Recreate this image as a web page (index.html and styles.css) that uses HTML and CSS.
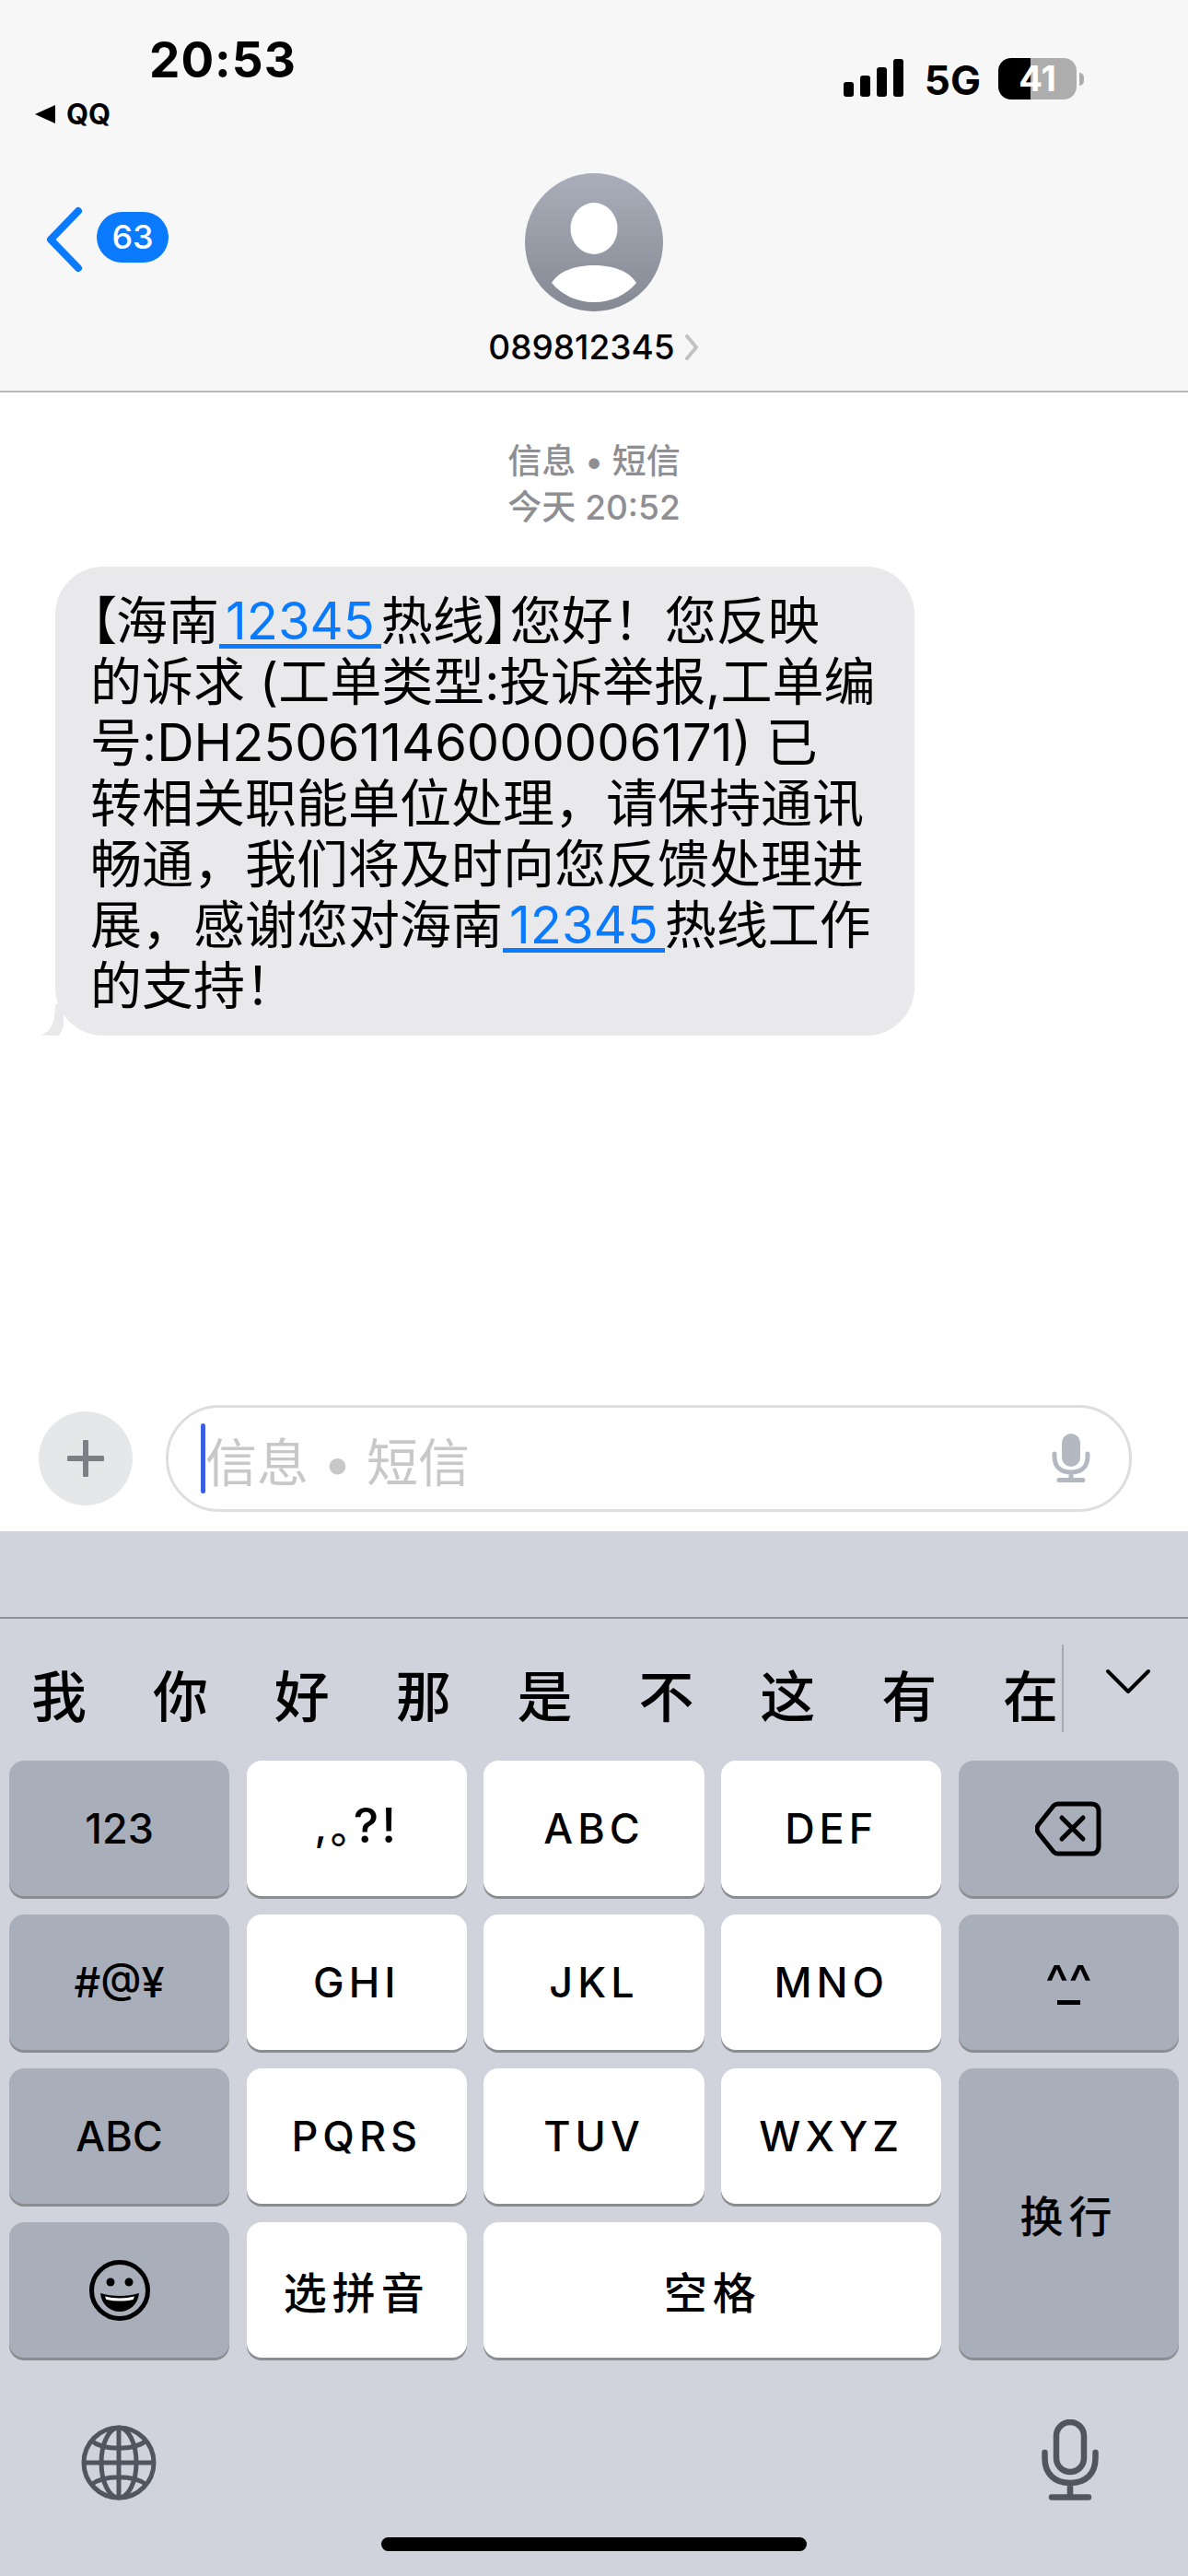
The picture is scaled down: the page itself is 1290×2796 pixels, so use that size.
FILE: index.html
```html
<!DOCTYPE html>
<html lang="zh-CN">
<head>
  <meta charset="UTF-8">
  <title>信息</title>
  <link rel="stylesheet" href="styles.css">
</head>
<body>
  <div class="phone">
    <!-- HEADER -->
    <header class="header">
      <div class="status">
        <div class="status-left">
          <div class="time">20:53</div>
          <div class="return"><span class="return-arrow"></span>QQ</div>
        </div>
        <div class="status-right">
          <div class="signal"><i class="s1"></i><i class="s2"></i><i class="s3"></i><i class="s4"></i></div>
          <div class="network">5G</div>
          <div class="battery"><div class="battery-body">41</div><div class="battery-nub"></div></div>
        </div>
      </div>
      <div class="nav">
        <div class="back">
          <svg class="back-chevron" width="46" height="72" viewBox="0 0 46 72"><path d="M38 5 L8 36 L38 67" fill="none" stroke="#0a7aff" stroke-width="8" stroke-linecap="round" stroke-linejoin="round"/></svg>
          <div class="badge">63</div>
        </div>
        <div class="contact">
          <svg class="avatar" width="150" height="150" viewBox="0 0 150 150">
            <defs><linearGradient id="avatarFill" x1="0" y1="0" x2="0" y2="1"><stop offset="0" stop-color="#a9aeba"/><stop offset="1" stop-color="#858993"/></linearGradient></defs>
            <circle cx="75" cy="75" r="75" fill="url(#avatarFill)"/>
            <ellipse cx="75" cy="60" rx="25.5" ry="28" fill="#fff"/>
            <path d="M29 119 C37 106 55 100 75 100 C95 100 113 106 121 119 C110 132 94 140 75 140 C56 140 40 132 29 119 Z" fill="#fff"/>
          </svg>
          <div class="contact-name">089812345<svg class="name-chevron" width="18" height="28" viewBox="0 0 18 28"><path d="M4 2 L14 14 L4 26" fill="none" stroke="#c2c2c4" stroke-width="4" stroke-linecap="round" stroke-linejoin="round"/></svg></div>
        </div>
      </div>
    </header>

    <!-- MESSAGES -->
    <main class="thread">
      <div class="stamp">
        <div class="stamp-kind">信息 • 短信</div>
        <div>今天 20:52</div>
      </div>
      <div class="bubble">
        <svg class="bubble-tail" width="24" height="34" viewBox="0 0 24 34"><path d="M24 0 L24 24 L19 34 C12 34 5 34 0 33 C10 30 15 20 15 0 Z" fill="#e9e9eb"/></svg>
        <div class="line"><span class="tight">【</span>海南<a class="link">12345</a>热线<span class="tight">】</span>您好！您反映</div>
        <div class="line">的诉求 (工单类型:投诉举报,工单编</div>
        <div class="line">号:DH25061146000006171) 已</div>
        <div class="line">转相关职能单位处理，请保持通讯</div>
        <div class="line">畅通，我们将及时向您反馈处理进</div>
        <div class="line">展，感谢您对海南<a class="link">12345</a>热线工作</div>
        <div class="line">的支持！</div>
      </div>
    </main>

    <!-- INPUT BAR -->
    <div class="composer">
      <div class="plus">
        <svg width="40" height="40" viewBox="0 0 40 40"><path d="M20 2 V38 M2 20 H38" stroke="#7d7f85" stroke-width="6" stroke-linecap="round"/></svg>
      </div>
      <div class="field">
        <div class="caret"></div>
        <div class="placeholder">信息 • 短信</div>
        <svg class="field-mic" width="42" height="54" viewBox="0 0 42 54">
          <rect x="11" y="0" width="20" height="36" rx="10" fill="#b4b8c0"/>
          <path d="M3 22 V25 C3 36 10 42 21 42 C32 42 39 36 39 25 V22 M21 42 V50 M8 50.5 H34" fill="none" stroke="#b4b8c0" stroke-width="5" stroke-linecap="round"/>
        </svg>
      </div>
    </div>

    <!-- KEYBOARD -->
    <section class="keyboard">
      <div class="kb-top"></div>
      <div class="candidates">
        <div class="candidate-list">
          <span>我</span><span>你</span><span>好</span><span>那</span><span>是</span><span>不</span><span>这</span><span>有</span><span>在</span>
        </div>
        <div class="candidate-more">
          <svg width="50" height="28" viewBox="0 0 50 28"><path d="M3 3 L25 25 L47 3" fill="none" stroke="#000" stroke-width="4" stroke-linecap="round" stroke-linejoin="round"/></svg>
        </div>
      </div>
      <div class="keys">
        <div class="key dark">123</div>
        <div class="key wide-text punct">,<span class="tight">。</span><span class="punct-big">?!</span></div>
        <div class="key wide-text">ABC</div>
        <div class="key wide-text">DEF</div>
        <div class="key dark">
          <svg width="72" height="60" viewBox="0 0 72 60"><path d="M25 3 H61 C66 3 69 6 69 11 V49 C69 54 66 57 61 57 H25 C23 57 21 56 20 55 L4 35 C1.500 32 1.500 28 4 25 L20 5 C21 4 23 3 25 3 Z" fill="none" stroke="#000" stroke-width="5" stroke-linejoin="round"/><path d="M29 18 L52 41 M52 18 L29 41" stroke="#000" stroke-width="5" stroke-linecap="round"/></svg>
        </div>

        <div class="key dark">#@¥</div>
        <div class="key wide-text">GHI</div>
        <div class="key wide-text">JKL</div>
        <div class="key wide-text">MNO</div>
        <div class="key dark face">^_^</div>

        <div class="key dark">ABC</div>
        <div class="key wide-text">PQRS</div>
        <div class="key wide-text">TUV</div>
        <div class="key wide-text">WXYZ</div>
        <div class="key dark return-key cjk">换行</div>

        <div class="key dark">
          <svg width="66" height="66" viewBox="0 0 66 66">
            <circle cx="33" cy="33" r="30.500" fill="none" stroke="#000" stroke-width="5"/>
            <circle cx="23" cy="24" r="4.500"/>
            <circle cx="43" cy="24" r="4.500"/>
            <path d="M12 36 C24 40 42 40 54 36 C53 48 44 56 33 56 C22 56 13 48 12 36 Z"/>
            <path d="M17 39.500 C27 42 39 42 49 39.500 C48.500 41 48 42 47.500 43 C38 45 28 45 18.500 43 C18 42 17.500 41 17 39.500 Z" fill="#fff"/>
          </svg>
        </div>
        <div class="key cjk">选拼音</div>
        <div class="key space cjk">空格</div>
      </div>
      <div class="kb-bottom">
        <svg width="82" height="82" viewBox="0 0 82 82" fill="none" stroke="#50555f" stroke-width="5">
          <circle cx="41" cy="41" r="38"/>
          <ellipse cx="41" cy="41" rx="19" ry="38"/>
          <path d="M41 3 V79 M3 41 H79 M11 17 C24 28 58 28 71 17 M11 65 C24 54 58 54 71 65"/>
        </svg>
        <svg width="62" height="88" viewBox="0 0 62 88" fill="none" stroke="#50555f" stroke-width="6.500" stroke-linecap="round">
          <rect x="16" y="3" width="30" height="54" rx="15"/>
          <path d="M3.500 36 V42 C3.500 59 14 69 31 69 C48 69 58.500 59 58.500 42 V36 M31 69 V84 M11 84.500 H51"/>
        </svg>
      </div>
      <div class="home-bar"></div>
    </section>
  </div>
</body>
</html>
```

FILE: styles.css
```css
* {
  box-sizing: border-box;
}

body {
  margin: 0;
  font-family: Inter, "Noto Sans CJK SC", sans-serif;
  background: #fff;
  color: #000;
}

.phone {
  width: 1290px;
  height: 2796px;
  overflow: hidden;
  display: flex;
  flex-direction: column;
}

/* Header */
.header {
  height: 426px;
  background: #f7f7f7;
  border-bottom: 2px solid #b8b8b8;
}

.status {
  height: 188px;
  display: flex;
  justify-content: space-between;
  padding: 36px 113px 0 38px;
}

.time {
  margin-left: 124px;
  font-size: 53px;
  line-height: 58px;
  font-weight: 700;
  letter-spacing: 1px;
}

.return {
  display: flex;
  align-items: center;
  gap: 12px;
  margin-top: 12px;
  font-size: 31px;
  line-height: 36px;
  font-weight: 700;
}

.return-arrow {
  width: 0;
  height: 0;
  border-top: 10px solid transparent;
  border-bottom: 10px solid transparent;
  border-right: 22px solid #000;
}

.status-right {
  display: flex;
  align-items: flex-end;
  height: 73px;
  margin-top: -1px;
}

.signal {
  display: flex;
  align-items: flex-end;
  gap: 7px;
  height: 41px;
  margin-bottom: 3px;
}

.signal i {
  display: block;
  width: 11px;
  background: #000;
  border-radius: 3px;
}

.signal .s1 { height: 16px; }
.signal .s2 { height: 23px; }
.signal .s3 { height: 32px; }
.signal .s4 { height: 41px; }

.network {
  margin-left: 23px;
  font-size: 44px;
  line-height: 42px;
  font-weight: 700;
}

.battery {
  display: flex;
  align-items: center;
  margin-left: 19px;
}

.battery-body {
  width: 85px;
  height: 45px;
  border-radius: 14px;
  background: linear-gradient(90deg, #000 41%, #adadad 41%);
  color: #fff;
  font-size: 38px;
  line-height: 45px;
  font-weight: 700;
  text-align: center;
}

.battery-nub {
  width: 5px;
  height: 14px;
  margin-left: 3px;
  background: #adadad;
  border-radius: 0 5px 5px 0;
}

.nav {
  display: grid;
  grid-template-columns: 1fr 150px 1fr;
}

.back {
  display: flex;
  align-items: flex-start;
  padding-left: 47px;
  padding-top: 36px;
}

.badge {
  width: 78px;
  height: 55px;
  margin-left: 12px;
  margin-top: 6px;
  border-radius: 28px;
  background: #0a7aff;
  color: #fff;
  font-size: 36px;
  line-height: 55px;
  font-weight: 500;
  text-align: center;
}

.contact {
  display: flex;
  flex-direction: column;
  align-items: center;
}

.avatar {
  display: block;
  flex: none;
}

.contact-name {
  display: flex;
  align-items: center;
  gap: 9px;
  margin-top: 18px;
  white-space: nowrap;
  font-size: 37px;
  line-height: 42px;
  font-weight: 500;
}

/* Messages */
.thread {
  height: 1078px;
  padding-top: 50px;
}

.stamp {
  text-align: center;
  font-size: 37px;
  line-height: 50px;
  font-weight: 500;
  color: #8e8e93;
}

.bubble {
  position: relative;
  width: 933px;
  height: 509px;
  margin: 39px 0 0 60px;
  padding: 26px 0 0 38px;
  background: #e9e9eb;
  border-radius: 52px;
  font-size: 56px;
  line-height: 66px;
}

.bubble-tail {
  position: absolute;
  left: -15px;
  bottom: 0;
}

.line {
  white-space: nowrap;
}

.tight {
  font-feature-settings: "palt";
}

.link {
  display: inline-block;
  padding: 0 7px;
  line-height: 50px;
  color: #0a7aff;
  border-bottom: 5px solid #0a7aff;
}

/* Input bar */
.composer {
  display: flex;
  align-items: center;
  height: 158px;
  padding-left: 42px;
}

.plus {
  display: flex;
  align-items: center;
  justify-content: center;
  width: 102px;
  height: 102px;
  margin-right: 36px;
  border-radius: 50%;
  background: #e6e7e9;
}

.field {
  display: flex;
  align-items: center;
  width: 1049px;
  height: 116px;
  padding: 0 42px 0 35px;
  border: 3px solid #dedede;
  border-radius: 58px;
}

.caret {
  flex: none;
  width: 5px;
  height: 76px;
  border-radius: 3px;
  background: #3c5ee5;
}

.placeholder {
  flex: 1;
  font-size: 56px;
  color: #c8c8ca;
}

/* Keyboard */
.keyboard {
  flex: 1;
  display: flex;
  flex-direction: column;
  background: #d0d3db;
}

.kb-top {
  height: 95px;
  border-bottom: 2px solid #8f9095;
}

.candidates {
  display: flex;
  height: 154px;
}

.candidate-list {
  display: flex;
  flex: none;
  width: 1153px;
  padding: 48px 4px 0 34px;
  justify-content: space-between;
  align-items: flex-start;
  font-size: 60px;
  line-height: 66px;
  font-weight: 500;
  font-family: "Noto Sans CJK SC", sans-serif;
}

.candidate-more {
  flex: 1;
  margin-top: 28px;
  height: 95px;
  padding: 26px 0 0 45px;
  border-left: 2px solid #a5a7ad;
  margin-left: 0;
}

.keys {
  display: grid;
  grid-template-columns: repeat(5, 1fr);
  grid-auto-rows: 147px;
  gap: 20px 18.500px;
  padding: 0 10px;
}

.key {
  display: flex;
  align-items: center;
  justify-content: center;
  border-radius: 16px;
  background: #fff;
  box-shadow: 0 3px 0 #8c8d91;
  font-size: 45px;
  font-weight: 500;
  white-space: nowrap;
}

.key.dark {
  background: #a9afba;
}

.wide-text {
  letter-spacing: 5px;
}

.punct {
  letter-spacing: 3px;
  padding-bottom: 6px;
}

.punct-big {
  font-size: 52px;
}

.face {
  font-size: 54px;
  letter-spacing: -9px;
  padding-right: 9px;
}

.cjk {
  font-family: "Noto Sans CJK SC", sans-serif;
  font-size: 47px;
  letter-spacing: 6px;
}

.return-key {
  grid-column: 5;
  grid-row: 3 / span 2;
}

.space {
  grid-column: span 2;
}

.kb-bottom {
  display: flex;
  justify-content: space-between;
  align-items: flex-end;
  height: 155px;
  padding: 0 97px 0 88px;
}

.home-bar {
  width: 462px;
  height: 15px;
  margin: 40px auto 0;
  border-radius: 8px;
  background: #000;
}
```
